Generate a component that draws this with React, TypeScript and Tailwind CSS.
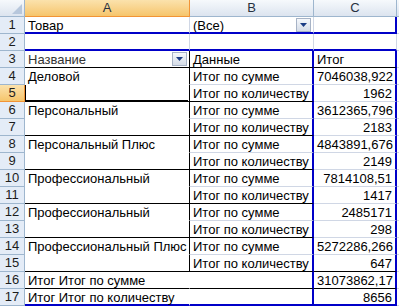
import React from "react";

const GRID = "#d0d7e5";
const BLUE = "#0000c8";
const BLK = "#000000";

type B = { color: string; w: number };
type CellDef = {
  text?: string;
  align?: "left" | "right";
  b?: B; // bottom
  r?: B; // right
  dropdown?: boolean;
  gray?: boolean;
  selected?: boolean;
  overflow?: boolean;
};

const g: B = { color: GRID, w: 1 };
const bk: B = { color: BLK, w: 1 };
const bl: B = { color: BLUE, w: 2 };

function Dropdown() {
  return (
    <div className="absolute right-[2px] top-[1px] w-[15px] h-[14px] border border-[#a7b3c6] bg-gradient-to-b from-[#f5f8fc] to-[#d5dce7] flex items-center justify-center">
      <svg width="7" height="4" viewBox="0 0 7 4">
        <path d="M0 0 H7 L3.5 4 Z" fill="#1b3d84" />
      </svg>
    </div>
  );
}

function Cell({ w, c }: { w: number; c: CellDef }) {
  const b = c.b ?? g;
  const r = c.r ?? g;
  return (
    <div
      className="relative shrink-0 h-[17px] box-border"
      style={{
        width: w,
        borderBottom: `${b.w}px solid ${b.color}`,
        borderRight: `${r.w}px solid ${r.color}`,
        overflow: c.overflow ? "visible" : "hidden",
        zIndex: c.overflow ? 2 : c.selected ? 3 : 1,
      }}
    >
      {c.text !== undefined && (
        <div
          className={`absolute left-0 top-0 h-[16px] leading-[17px] whitespace-nowrap px-[3px] ${
            c.align === "right" ? "right-0 text-right" : "text-left"
          } ${c.gray ? "text-[#333333]" : "text-black"}`}
          style={c.align === "right" ? { left: 0 } : undefined}
        >
          {c.text}
        </div>
      )}
      {c.dropdown && <Dropdown />}
      {c.selected && (
        <>
          <div className="absolute left-[-1px] top-[-2px] w-[167px] h-[19px] border-2 border-black pointer-events-none" />
          <div className="absolute right-[-5px] bottom-[-4px] w-[6px] h-[6px] bg-black border border-white" />
        </>
      )}
    </div>
  );
}

const W = [165, 124, 83];

const rows: CellDef[][] = [
  [
    { text: "Товар", b: bl },
    { text: "(Все)", b: bl, dropdown: true },
    { b: bl, r: bl },
  ],
  [{ b: bl }, { b: bl }, { b: bl }],
  [
    { text: "Название", gray: true, b: bk, r: bk, dropdown: true },
    { text: "Данные", b: bk, r: bl },
    { text: "Итог", b: bk, r: bl },
  ],
  [
    { text: "Деловой", r: bk, b: { color: "transparent", w: 1 } },
    { text: "Итог по сумме", r: bl },
    { text: "7046038,922", align: "right", r: bl },
  ],
  [
    { r: bk, b: bk, selected: true },
    { text: "Итог по количеству", b: bk, r: bl },
    { text: "1962", align: "right", r: bl },
  ],
  [
    { text: "Персональный", r: bk, b: { color: "#ffffff", w: 1 } },
    { text: "Итог по сумме", r: bl },
    { text: "3612365,796", align: "right", r: bl },
  ],
  [
    { r: bk, b: bk },
    { text: "Итог по количеству", b: bk, r: bl },
    { text: "2183", align: "right", r: bl },
  ],
  [
    { text: "Персональный Плюс", r: bk, b: { color: "#ffffff", w: 1 } },
    { text: "Итог по сумме", r: bl },
    { text: "4843891,676", align: "right", r: bl },
  ],
  [
    { r: bk, b: bk },
    { text: "Итог по количеству", b: bk, r: bl },
    { text: "2149", align: "right", r: bl },
  ],
  [
    { text: "Профессиональный", r: bk, b: { color: "#ffffff", w: 1 } },
    { text: "Итог по сумме", r: bl },
    { text: "7814108,51", align: "right", r: bl },
  ],
  [
    { r: bk, b: bk },
    { text: "Итог по количеству", b: bk, r: bl },
    { text: "1417", align: "right", r: bl },
  ],
  [
    { text: "Профессиональный", r: bk, b: { color: "#ffffff", w: 1 } },
    { text: "Итог по сумме", r: bl },
    { text: "2485171", align: "right", r: bl },
  ],
  [
    { r: bk, b: bk },
    { text: "Итог по количеству", b: bk, r: bl },
    { text: "298", align: "right", r: bl },
  ],
  [
    { text: "Профессиональный Плюс", r: bk, b: { color: "#ffffff", w: 1 } },
    { text: "Итог по сумме", r: bl },
    { text: "5272286,266", align: "right", r: bl },
  ],
  [
    { r: bk, b: bk },
    { text: "Итог по количеству", b: bk, r: bl },
    { text: "647", align: "right", r: bl, b: bk },
  ],
  [
    { text: "Итог Итог по сумме", b: bk, r: { color: "#ffffff", w: 1 }, overflow: true },
    { b: bk, r: bl },
    { text: "31073862,17", align: "right", r: bl, b: bk },
  ],
  [
    { text: "Итог Итог по количеству", b: bl, r: { color: "#ffffff", w: 1 }, overflow: true },
    { b: bl, r: bl },
    { text: "8656", align: "right", r: bl, b: bl },
  ],
];

export default function App() {
  return (
    <div
      className="w-[399px] h-[307px] bg-white overflow-hidden text-[13px]"
      style={{ fontFamily: '"Liberation Sans", Arial, sans-serif' }}
    >
      {/* column header */}
      <div className="flex h-[17px]">
        <div className="relative w-[25px] shrink-0 h-[17px] box-border border-r border-b border-[#9eb6ce] bg-gradient-to-b from-[#f6f9fc] to-[#dce4ef]">
          <svg className="absolute right-[2px] bottom-[2px]" width="10" height="10" viewBox="0 0 10 10">
            <path d="M10 0 V10 H0 Z" fill="#b7c7dc" />
          </svg>
        </div>
        <div className="w-[165px] shrink-0 h-[17px] box-border border-r border-b border-[#f29436] bg-gradient-to-b from-[#fbe2ac] to-[#f6c56b] flex items-center justify-center text-[#27313f] leading-[16px]">
          A
        </div>
        <div className="w-[124px] shrink-0 h-[17px] box-border border-r border-b border-[#9eb6ce] bg-gradient-to-b from-[#f6f9fc] to-[#dce4ef] flex items-center justify-center text-[#27313f] leading-[16px]">
          B
        </div>
        <div className="w-[83px] shrink-0 h-[17px] box-border border-r border-b border-[#9eb6ce] bg-gradient-to-b from-[#f6f9fc] to-[#dce4ef] flex items-center justify-center text-[#27313f] leading-[16px]">
          C
        </div>
        <div className="flex-1 h-[17px] box-border border-b border-[#9eb6ce] bg-gradient-to-b from-[#f6f9fc] to-[#dce4ef]" />
      </div>
      {rows.map((row, i) => (
        <div key={i} className="flex h-[17px]">
          <div
            className={`w-[25px] shrink-0 h-[17px] box-border border-r border-b flex items-center justify-center leading-[16px] text-[#1c1c1c] ${
              i === 4
                ? "border-[#f29436] bg-gradient-to-b from-[#fbe2ac] to-[#f6c56b]"
                : "border-[#9eb6ce] bg-[#e4ecf7]"
            }`}
          >
            {i + 1}
          </div>
          {row.map((c, j) => (
            <Cell key={j} w={W[j]} c={c} />
          ))}
          <div className="flex-1 h-[17px] box-border border-b" style={{ borderBottomColor: GRID }} />
        </div>
      ))}
    </div>
  );
}
